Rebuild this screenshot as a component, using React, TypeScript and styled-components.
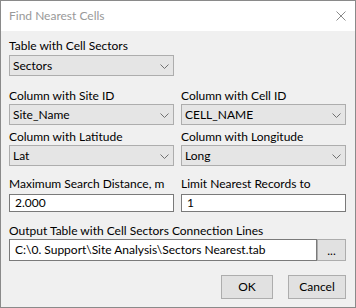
import React from "react";
import styled, { createGlobalStyle } from "styled-components";

const Global = createGlobalStyle`
  html, body { margin: 0; padding: 0; background: #ffffff; }
  body { font-family: Lato, "Noto Sans", sans-serif; font-size: 12px; }
  * { box-sizing: border-box; }
`;

const Window = styled.div`
  width: 356px;
  height: 308px;
  border: 1px solid #8a8a8a;
  background: #f0f0f0;
  display: flex;
  flex-direction: column;
  font-family: Lato, "Noto Sans", sans-serif;
  font-size: 12px;
  color: #000;
`;

const TitleBar = styled.div`
  height: 30px;
  flex: none;
  background: #ffffff;
  display: flex;
  align-items: center;
  justify-content: space-between;
  padding: 0 9px 0 8px;
  color: #999999;
  line-height: 16px;
`;

const CloseIcon = styled.svg`
  width: 10px;
  height: 10px;
  margin-top: -1px;
`;

const Body = styled.div`
  flex: 1;
  padding: 7px 9px 0 8px;
  display: flex;
  flex-direction: column;
`;

const Row = styled.div<{ $mt: number }>`
  display: grid;
  grid-template-columns: 165px 165px;
  column-gap: 7px;
  margin-top: ${(p) => p.$mt}px;
`;

const Field = styled.div<{ $mt?: number }>`
  display: flex;
  flex-direction: column;
  margin-top: ${(p) => p.$mt ?? 0}px;
`;

const Label = styled.div<{ $gap: number }>`
  line-height: 16px;
  height: 16px;
  white-space: nowrap;
  margin-bottom: ${(p) => p.$gap}px;
`;

const Combo = styled.div`
  width: 165px;
  height: 21px;
  border: 1px solid #adadad;
  background: #e5e5e5;
  display: flex;
  align-items: center;
  justify-content: space-between;
  padding: 0 4px 0 3px;
  line-height: 16px;
`;

const Chevron = styled.svg`
  width: 9px;
  height: 5px;
  margin-top: 1px;
`;

const TextBox = styled.div<{ $h: number }>`
  height: ${(p) => p.$h}px;
  flex: 1;
  border: 1px solid #7a7a7a;
  background: #ffffff;
  display: flex;
  align-items: center;
  padding: 0 5px;
  line-height: 16px;
  white-space: nowrap;
  overflow: hidden;
`;

const PathRow = styled.div`
  display: flex;
  width: 337px;
`;

const Button = styled.div<{ $w: number }>`
  width: ${(p) => p.$w}px;
  height: 24px;
  flex: none;
  border: 1px solid #adadad;
  background: #e1e1e1;
  display: flex;
  align-items: center;
  justify-content: center;
  line-height: 16px;
`;

const BrowseButton = styled(Button)`
  height: 22px;
  padding-top: 1px;
`;

const ButtonBar = styled.div`
  display: flex;
  justify-content: flex-end;
  gap: 15px;
  margin-top: 14px;
`;

const DropDown = ({ value }: { value: string }) => (
  <Combo>
    <span>{value}</span>
    <Chevron viewBox="0 0 9 5">
      <polyline points="0.5,0.5 4.5,4.5 8.5,0.5" fill="none" stroke="#707070" strokeWidth="1" />
    </Chevron>
  </Combo>
);

export default function App() {
  return (
    <>
      <Global />
      <Window>
        <TitleBar>
          <span>Find Nearest Cells</span>
          <CloseIcon viewBox="0 0 10 10">
            <line x1="0.5" y1="0.5" x2="9.5" y2="9.5" stroke="#8a8a8a" strokeWidth="1" />
            <line x1="9.5" y1="0.5" x2="0.5" y2="9.5" stroke="#8a8a8a" strokeWidth="1" />
          </CloseIcon>
        </TitleBar>
        <Body>
          <Field>
            <Label $gap={1}>Table with Cell Sectors</Label>
            <DropDown value="Sectors" />
          </Field>
          <Row $mt={12}>
            <Field>
              <Label $gap={0}>Column with Site ID</Label>
              <DropDown value="Site_Name" />
            </Field>
            <Field>
              <Label $gap={0}>Column with Cell ID</Label>
              <DropDown value="CELL_NAME" />
            </Field>
          </Row>
          <Row $mt={4}>
            <Field>
              <Label $gap={0}>Column with Latitude</Label>
              <DropDown value="Lat" />
            </Field>
            <Field>
              <Label $gap={0}>Column with Longitude</Label>
              <DropDown value="Long" />
            </Field>
          </Row>
          <Row $mt={10}>
            <Field>
              <Label $gap={2}>Maximum Search Distance, m</Label>
              <TextBox $h={20}>2.000</TextBox>
            </Field>
            <Field>
              <Label $gap={2}>Limit Nearest Records to</Label>
              <TextBox $h={20}>1</TextBox>
            </Field>
          </Row>
          <Field $mt={11}>
            <Label $gap={0}>Output Table with Cell Sectors Connection Lines</Label>
            <PathRow>
              <TextBox $h={22}>C:\0. Support\Site Analysis\Sectors Nearest.tab</TextBox>
              <BrowseButton $w={29}>...</BrowseButton>
            </PathRow>
          </Field>
          <ButtonBar>
            <Button $w={52}>OK</Button>
            <Button $w={58}>Cancel</Button>
          </ButtonBar>
        </Body>
      </Window>
    </>
  );
}
